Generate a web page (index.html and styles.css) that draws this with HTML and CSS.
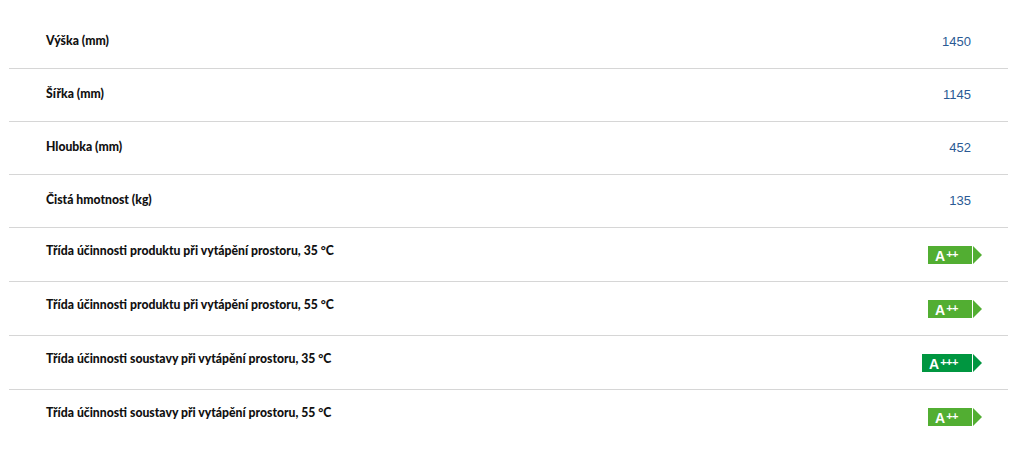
FILE: index.html
```html
<!DOCTYPE html>
<html lang="cs">
<head>
<meta charset="utf-8">
<link rel="stylesheet" href="styles.css">
</head>
<body>
<div class="specs">
  <div class="row"><span class="label">Výška (mm)</span><span class="value">1450</span></div>
  <div class="row"><span class="label">Šířka (mm)</span><span class="value">1145</span></div>
  <div class="row"><span class="label">Hloubka (mm)</span><span class="value">452</span></div>
  <div class="row"><span class="label">Čistá hmotnost (kg)</span><span class="value">135</span></div>
  <div class="row row-badge"><span class="label">Třída účinnosti produktu při vytápění prostoru, 35 °C</span><span class="badge a2"><span class="badge-body">A<sup>++</sup></span><span class="badge-tip"></span></span></div>
  <div class="row row-badge"><span class="label">Třída účinnosti produktu při vytápění prostoru, 55 °C</span><span class="badge a2"><span class="badge-body">A<sup>++</sup></span><span class="badge-tip"></span></span></div>
  <div class="row row-badge"><span class="label">Třída účinnosti soustavy při vytápění prostoru, 35 °C</span><span class="badge a3"><span class="badge-body">A<sup>+++</sup></span><span class="badge-tip"></span></span></div>
  <div class="row row-badge last"><span class="label">Třída účinnosti soustavy při vytápění prostoru, 55 °C</span><span class="badge a2"><span class="badge-body">A<sup>++</sup></span><span class="badge-tip"></span></span></div>
</div>
</body>
</html>
```
FILE: styles.css
```css
html, body {
  margin: 0;
  padding: 0;
  background: #ffffff;
}

.specs {
  margin: 0 20px 0 9px;
  padding-top: 16px;
}

.row {
  display: flex;
  align-items: center;
  justify-content: space-between;
  height: 52px;
  border-bottom: 1px solid #d6d6d6;
}

.row-badge {
  height: 53px;
}

.row.last {
  border-bottom: none;
}

.label {
  padding-left: 37px;
  padding-bottom: 4px;
  font-family: "Lato", "Noto Sans", sans-serif;
  font-weight: 900;
  font-size: 12.2px;
  color: #111111;
}

.row-badge .label {
  padding-bottom: 8px;
}

.value {
  padding-right: 37px;
  padding-bottom: 2px;
  font-family: "Liberation Sans", Arial, sans-serif;
  font-size: 13px;
  color: #2a5a94;
}

.badge {
  display: flex;
  align-items: stretch;
  height: 18px;
  margin-right: 26px;
}

.badge-body {
  display: flex;
  align-items: center;
  justify-content: flex-start;
  padding-left: 7px;
  padding-top: 2px;
  color: #ffffff;
  font-family: "Liberation Sans", Arial, sans-serif;
  font-weight: 700;
  font-size: 14px;
  line-height: 18px;
  box-sizing: border-box;
}

.badge-body sup {
  font-size: 11px;
  line-height: 0;
  position: relative;
  top: -2px;
  vertical-align: super;
  margin-left: 1px;
  letter-spacing: -0.5px;
}

.a2 .badge-body {
  width: 44px;
  background: #52ae32;
}

.a3 .badge-body {
  width: 50px;
  background: #009640;
}

.badge-tip {
  width: 0;
  height: 0;
  margin-left: 1px;
  border-top: 9px solid transparent;
  border-bottom: 9px solid transparent;
  border-left: 9px solid #52ae32;
}

.a3 .badge-tip {
  border-left-color: #009640;
}
```
